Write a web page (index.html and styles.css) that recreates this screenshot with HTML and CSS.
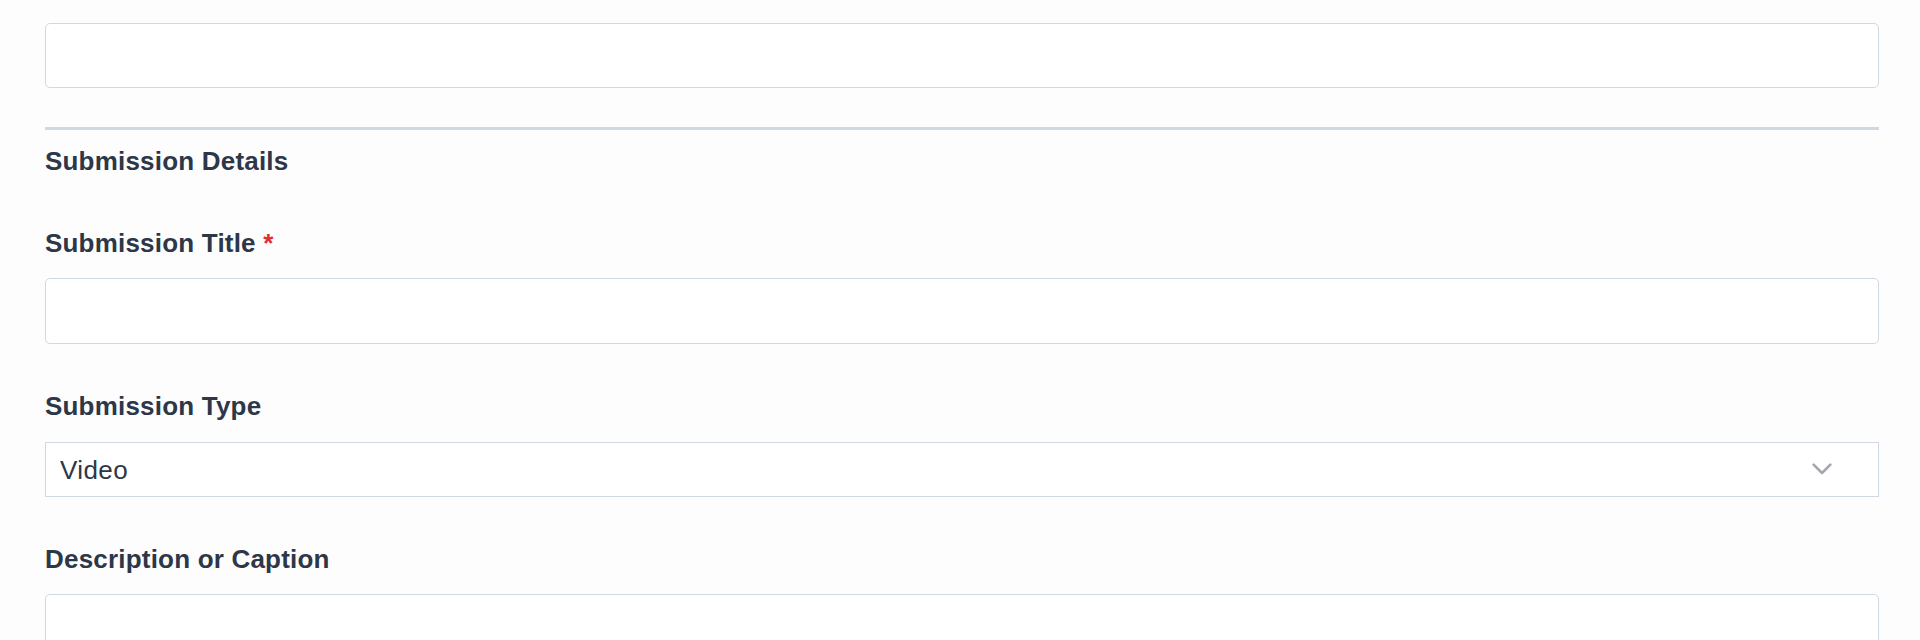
FILE: index.html
```html
<!DOCTYPE html>
<html lang="en">
<head>
<meta charset="utf-8">
<title>Submission Form</title>
<link rel="stylesheet" href="styles.css">
</head>
<body>
<form class="form">
  <input class="text-input" type="text" aria-label="Field">
  <hr class="divider">
  <h3 class="section-title">Submission Details</h3>

  <div class="field field-title">
    <label class="label" for="title">Submission Title <span class="req">*</span></label>
    <input class="text-input" id="title" type="text">
  </div>

  <div class="field field-type">
    <label class="label" for="type">Submission Type</label>
    <div class="select-wrap">
      <select class="select" id="type">
        <option>Video</option>
      </select>
      <svg class="chevron" width="20" height="12" viewBox="0 0 20 12" aria-hidden="true">
        <path d="M1.6 1.6 L10 10 L18.4 1.6" fill="none" stroke="#a3a8b0" stroke-width="2.6" stroke-linecap="round" stroke-linejoin="round"/>
      </svg>
    </div>
  </div>

  <div class="field field-desc">
    <label class="label" for="desc">Description or Caption</label>
    <textarea class="textarea" id="desc"></textarea>
  </div>
</form>
</body>
</html>
```

FILE: styles.css
```css
html, body {
  margin: 0;
  padding: 0;
  background: #fdfdfe;
}

body {
  font-family: "Liberation Sans", Arial, sans-serif;
  color: #2d3748;
  overflow: hidden;
}

.form {
  display: flex;
  flex-direction: column;
  padding: 23px 41px 0 45px;
}

.text-input {
  display: block;
  box-sizing: border-box;
  width: 100%;
  height: 65px;
  margin: 0;
  border: 1.5px solid #d0d8e3;
  border-radius: 5px;
  background: #ffffff;
  font: inherit;
}

.divider {
  height: 3px;
  margin: 39px 0 0 0;
  border: 0;
  background: #d0d8e2;
}

.section-title {
  margin: 15px 0 0 0;
  font-size: 26px;
  line-height: 32px;
  font-weight: 700;
  letter-spacing: 0.2px;
}

.field {
  display: flex;
  flex-direction: column;
}

.field-title {
  margin-top: 50px;
}

.field-title .text-input {
  height: 66px;
  margin-top: 19px;
}

.field-type {
  margin-top: 46px;
}

.field-desc {
  margin-top: 46px;
}

.label {
  display: block;
  font-size: 26px;
  line-height: 32px;
  font-weight: 700;
  letter-spacing: 0.2px;
}

.req {
  color: #e02d2d;
}

.select-wrap {
  position: relative;
  margin-top: 20px;
}

.select {
  display: block;
  box-sizing: border-box;
  width: 100%;
  height: 55px;
  margin: 0;
  padding: 0 60px 0 14px;
  border: 1.5px solid #d0d8e3;
  border-radius: 0;
  background: #ffffff;
  color: #2d3748;
  font-family: "Liberation Sans", Arial, sans-serif;
  font-size: 26px;
  letter-spacing: 0.4px;
  -webkit-appearance: none;
  appearance: none;
  outline: none;
}

.chevron {
  position: absolute;
  right: 47px;
  top: 21px;
  pointer-events: none;
}

.textarea {
  display: block;
  box-sizing: border-box;
  width: 100%;
  height: 140px;
  margin-top: 19px;
  border: 1.5px solid #d0d8e3;
  border-radius: 5px;
  background: #ffffff;
  resize: none;
  font: inherit;
}
```
